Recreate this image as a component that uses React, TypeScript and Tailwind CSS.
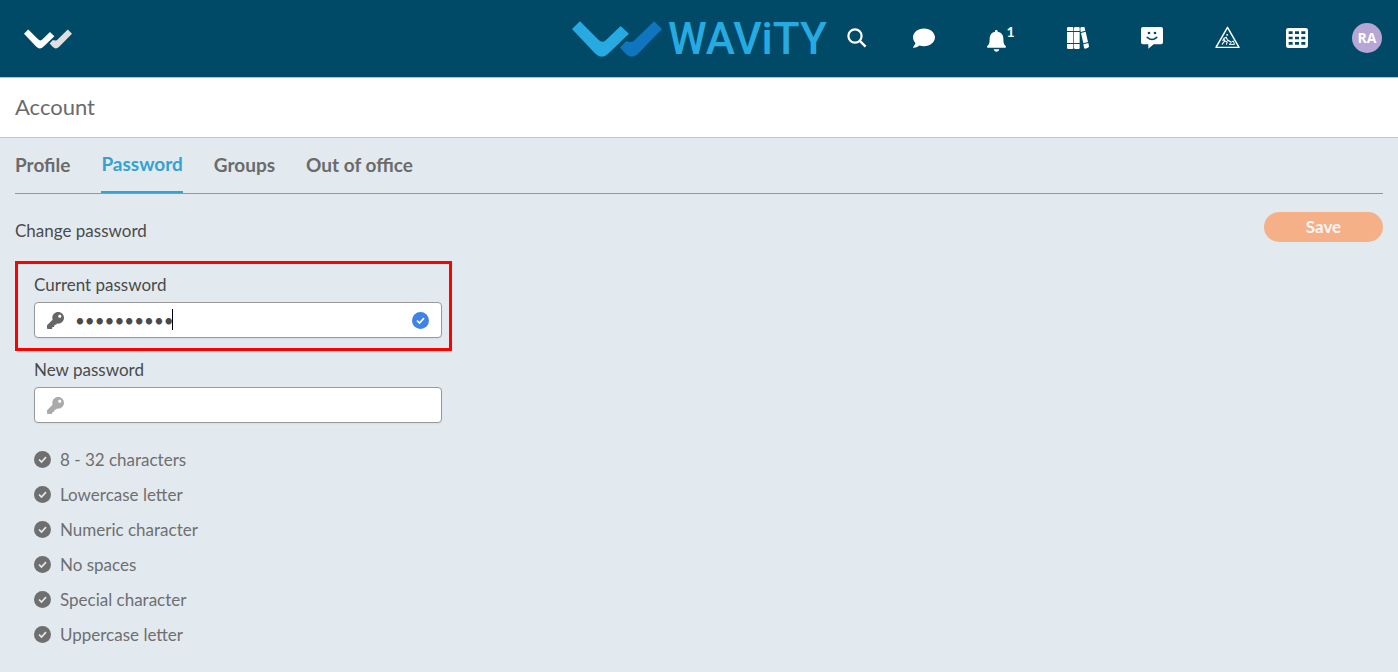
import React from 'react';
import { FaComment, FaKey } from 'react-icons/fa';

const LogoMark: React.FC<{ className: string; light: string; dark: string }> = ({ className, light, dark }) => (
  <svg viewBox="0 0 272 108" className={className} aria-hidden="true">
    <path fill={light} d="M0 24 24 0 80 56Q91 68 102 58L147 15 172 38 110 98Q90 118 70 98Z" />
    <path fill={dark} d="M145 80 164 60Q174 65 186 61L248 0 272 24 198 100Q180 115 164 100Z" />
  </svg>
);

const SearchIcon = () => (
  <svg viewBox="0 0 20 20" className="w-5 h-5" fill="none" stroke="currentColor">
    <circle cx="8" cy="8" r="6.6" strokeWidth="2.2" />
    <path d="M12.8 12.8 18.6 18.6" strokeWidth="2.4" />
  </svg>
);

const BellIcon = () => (
  <svg viewBox="0 0 57 66" className="w-[19px] h-[22px]" fill="currentColor">
    <path d="M28 0c3 0 4 2 4 5 11 2 17 9 17 20 0 15 2 19 7 23 2 2 0 5-2 5H3c-3 0-4-3-2-5 5-4 7-8 7-23C8 14 14 7 24 5c0-3 1-5 4-5Z" />
    <path d="M20 58h17c-1 4-4 7-8.500 7S21 62 20 58Z" />
  </svg>
);

const BooksIcon = () => (
  <svg viewBox="0 0 66 66" className="w-[22px] h-[22px]" fill="currentColor">
    <path d="M4 0h12q3 0 3 3v9H0V4q0-4 4-4ZM0 15h19v33H0ZM0 51h19v11q0 4-3 4H4q-4 0-4-4Z" />
    <path d="M25 0h10q3 0 3 3v9H21V3q0-3 4-3ZM21 15h17v33H21ZM21 51h17v11q0 4-3 4H25q-4 0-4-4Z" />
    <path d="M40 4q0-3 3-4l6-1q3 0 4 3l2 9-14 4ZM42 18l14-4 7 31-14 4ZM49 52l15-4 2 10q0 3-3 4l-8 3q-3 0-4-3Z" />
  </svg>
);

const ChatSmileIcon = () => (
  <svg viewBox="0 0 66 66" className="w-[22px] h-[22px]">
    <path fill="currentColor" d="M6 0h54q6 0 6 6v40q0 6-6 6H38L22 65V52H6q-6 0-6-6V6q0-6 6-6Z" />
    <g fill="#004a67">
      <circle cx="24" cy="18" r="4" />
      <circle cx="42" cy="18" r="4" />
    </g>
    <path d="M19 31q14 13 28 0" fill="none" stroke="#004a67" strokeWidth="5" strokeLinecap="round" />
  </svg>
);

const RoadWorkIcon = () => (
  <svg viewBox="0 0 76 68" className="w-[25px] h-[23px]" fill="none" stroke="currentColor" strokeLinejoin="round" strokeLinecap="round">
    <path d="M38 3 73 64H3Z" strokeWidth="4.500" />
    <circle cx="37" cy="26" r="3" fill="currentColor" stroke="none" />
    <path d="M22 54 29 45 27 37 34 33 38 42 48 47M29 44 37 48 35 54M27 37 24 43" strokeWidth="3.500" />
    <path d="M44 54 50 49 55 44 59 54Z" strokeWidth="3" />
  </svg>
);

const TableIcon = () => (
  <svg viewBox="0 0 66 60" className="w-[22px] h-5">
    <path
      fill="currentColor"
      fillRule="evenodd"
      d="M7 0h52q7 0 7 7v46q0 7-7 7H7q-7 0-7-7V7q0-7 7-7ZM8 10v8h12v-8ZM27 10v8h12v-8ZM46 10v8h12v-8ZM8 26v8h12v-8ZM27 26v8h12v-8ZM46 26v8h12v-8ZM8 42v8h12v-8ZM27 42v8h12v-8ZM46 42v8h12v-8Z"
    />
  </svg>
);

const CheckCircle: React.FC<{ className: string; tick: string }> = ({ className, tick }) => (
  <svg viewBox="0 0 17 17" className={className} aria-hidden="true">
    <circle cx="8.500" cy="8.500" r="8.500" fill="currentColor" />
    <path d="M5 8.500 7.500 11 12 6.200" fill="none" stroke={tick} strokeWidth="1.700" />
  </svg>
);

const tabs = ['Profile', 'Password', 'Groups', 'Out of office'];

const rules = [
  '8 - 32 characters',
  'Lowercase letter',
  'Numeric character',
  'No spaces',
  'Special character',
  'Uppercase letter',
];

const Header = () => (
  <header className="grid grid-cols-[1fr_auto_1fr] items-center h-[78px] bg-[#004a67] border-b border-[#8fcfe2] text-white">
    <a href="#home" aria-label="Home" className="pl-6">
      <LogoMark className="w-12 h-5" light="#ffffff" dark="#dfdfdf" />
    </a>
    <div className="flex items-center gap-1.5">
      <LogoMark className="w-[90px] h-9" light="#27aae1" dark="#1075bf" />
      <span className="w-[158px] font-['Roboto'] font-medium text-[44px] leading-none text-[#27aae1] whitespace-nowrap">WAViTY</span>
    </div>
    <nav className="flex items-center justify-end pr-4 pb-0.5">
      <button aria-label="Search"><SearchIcon /></button>
      <button aria-label="Messages" className="ml-[46px]"><FaComment className="w-[22px] h-[22px]" /></button>
      <button aria-label="Notifications" className="ml-[52px] flex items-center">
        <span className="pt-1.5"><BellIcon /></span>
        <span className="w-[9px] pb-3 font-bold text-sm leading-4">1</span>
      </button>
      <button aria-label="Library" className="ml-[52px]"><BooksIcon /></button>
      <button aria-label="Chat" className="ml-[52px]"><ChatSmileIcon /></button>
      <button aria-label="Work in progress" className="ml-[52px]"><RoadWorkIcon /></button>
      <button aria-label="Apps" className="ml-[46px]"><TableIcon /></button>
      <button className="ml-11 w-[30px] h-[30px] rounded-full bg-[#b7a6d3] font-['Open_Sans'] font-bold text-sm">RA</button>
    </nav>
  </header>
);

export default function App() {
  return (
    <div className="min-h-screen bg-[#e2eaef] font-['Lato',sans-serif] text-[17px] text-[#4a4a4a]">
      <Header />
      <div className="flex items-center h-[60px] px-[15px] pb-0.5 bg-white border-b border-[#a5cfdc]">
        <h1 className="text-[22px] text-[#6b6b6b]">Account</h1>
      </div>

      <main className="px-[15px]">
        <nav className="flex gap-[31px] h-14 border-b border-[#8f9a9f] text-[19px] font-bold text-[#6b6b6b]">
          {tabs.map((tab) => (
            <a
              key={tab}
              href={`#${tab}`}
              className={tab === 'Password' ? 'pt-3 border-b-2 border-[#35a2d1] text-[#35a2d1]' : 'pt-[13px]'}
            >
              {tab}
            </a>
          ))}
        </nav>

        <div className="flex justify-between items-start pt-[18px]">
          <h2 className="pt-[7px] leading-6">Change password</h2>
          <button className="w-[119px] h-[30px] rounded-full bg-[#f5b088] font-bold text-[#f6f6f6]">Save</button>
        </div>

        <form className="w-[437px] pt-[18px]">
          <div className="border-3 border-[#ff0000] h-[90px] pl-4 pr-[7px] pt-2">
            <label htmlFor="current" className="block h-[30px] leading-[26px]">Current password</label>
            <div className="relative flex items-center h-9 px-3 rounded border border-[#999] bg-white shadow-xs">
              <FaKey className="w-[17px] h-[17px] text-[#666]" />
              <input
                id="current"
                type="password"
                defaultValue="wavity1234"
                className="flex-1 min-w-0 h-full pl-[11px] outline-none caret-transparent"
              />
              <span className="absolute left-[137px] top-1.5 w-px h-[21px] bg-black" />
              <CheckCircle className="w-[17px] h-[17px] text-[#3f83e8]" tick="#ffffff" />
            </div>
          </div>
          <div className="pl-[19px] pr-2.5 pt-1.5">
            <label htmlFor="new" className="block h-[30px] leading-[26px]">New password</label>
            <div className="flex items-center h-9 px-3 rounded border border-[#999] bg-white shadow-xs">
              <FaKey className="w-[17px] h-[17px] text-[#aaa]" />
              <input id="new" type="password" className="flex-1 min-w-0 h-full pl-[11px] outline-none" />
            </div>
            <ul className="pt-[19px] text-[#6f6f6f]">
              {rules.map((rule) => (
                <li key={rule} className="flex items-center gap-[9px] h-[35px]">
                  <CheckCircle className="w-[17px] h-[17px]" tick="#e2eaef" />
                  {rule}
                </li>
              ))}
            </ul>
          </div>
        </form>
      </main>
    </div>
  );
}
